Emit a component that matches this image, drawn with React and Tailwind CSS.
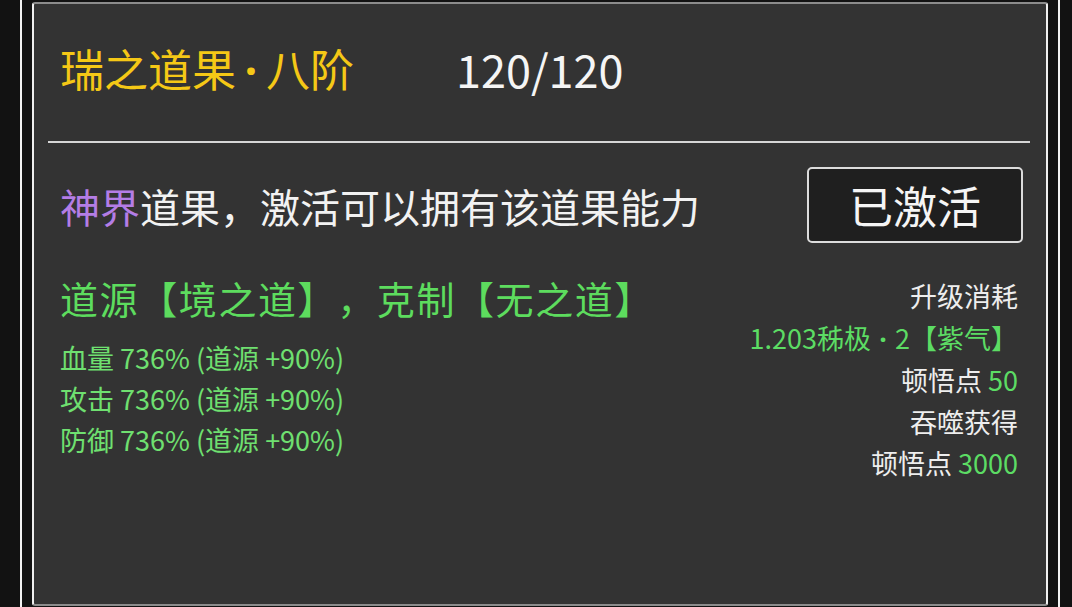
import React from 'react'

const font = { fontFamily: '"Noto Sans CJK SC", "Noto Sans", sans-serif' }

const stats = [
  ['血量', '736%', '+90%'],
  ['攻击', '736%', '+90%'],
  ['防御', '736%', '+90%'],
]

// narrow middle dot, the CJK font draws it full width
function Dot({ w }) {
  return <span className={`inline-block text-center font-['Noto_Sans'] font-bold ${w}`}>·</span>
}

function StatLine({ label, value, bonus }) {
  return (
    <div className="leading-[41px] text-[27px] text-[#6fe070]">
      {label} {value} (道源 {bonus})
    </div>
  )
}

function CostColumn() {
  return (
    <div className="text-right text-[27px] leading-[41.6px] text-[#eeeeee]">
      <div>升级消耗</div>
      <div className="text-[#5cdc64]">
        1.203秭极<Dot w="w-[24px]" />2【紫气】
      </div>
      <div>
        顿悟点 <span className="text-[#5cdc64]">50</span>
      </div>
      <div>吞噬获得</div>
      <div>
        顿悟点 <span className="text-[#5cdc64]">3000</span>
      </div>
    </div>
  )
}

export default function App() {
  return (
    <div className="w-[1072px] h-[607px] bg-[#121212] pl-[20px] overflow-hidden [text-spacing-trim:space-all]" style={font}>
      <div className="w-[1040px] h-[607px] border-x-2 border-[#f2f2f2] px-[10px] pt-[2px]">
        <div className="h-[604px] bg-[#333333] border-2 border-t-[#8c8c8c] border-b-[#8c8c8c] border-x-[#f0f0f0] rounded-[3px]">
          {/* header */}
          <div className="h-[137px] flex items-center pl-[26px] pb-[8px]">
            <div className="w-[396px] text-[44px] text-[#f5c816] leading-none">
              瑞之道果<Dot w="w-[30px]" />八阶
            </div>
            <div className="text-[45px] text-[#f5f5f5] leading-none">120/120</div>
          </div>
          <div className="h-[2px] bg-[#d6d6d6] ml-[14px] mr-[16px]" />

          <div className="flex items-center justify-between pt-[24px] pl-[26px] pr-[23px]">
            <div className="text-[40px] text-[#f2f2f2] leading-none pt-[2px]">
              <span className="text-[#b47de6]">神界</span>道果，激活可以拥有该道果能力
            </div>
            <button className="w-[216px] h-[76px] rounded-[5px] border-2 border-[#dcdcdc] bg-[#1f1f1f] text-[44px] text-[#f5f5f5] leading-none">
              已激活
            </button>
          </div>

          <div className="flex items-start justify-between pt-[30px] pl-[26px] pr-[28px]">
            <div>
              <div className="h-[50px] leading-[50px] text-[38px] tracking-[1.6px] text-[#5ddc5e]">
                道源【境之道】，克制【无之道】
              </div>
              <div className="mt-[14px]">
                {stats.map(([l, v, b]) => (
                  <StatLine key={l} label={l} value={v} bonus={b} />
                ))}
              </div>
            </div>
            <div className="pt-[2px]">
              <CostColumn />
            </div>
          </div>
        </div>
      </div>
    </div>
  )
}
